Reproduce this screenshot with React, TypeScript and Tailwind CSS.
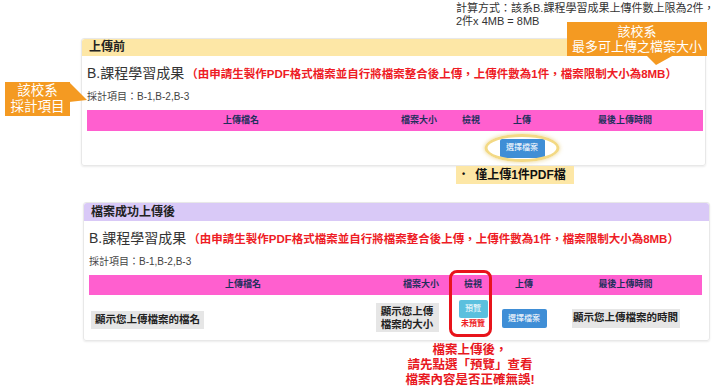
import React from 'react';

const FONT = { fontFamily: '"Liberation Sans", "Noto Sans CJK TC", sans-serif' };

const HeaderBar: React.FC = () => (
    <div className="grid h-full grid-cols-[282px_76px_52px_50px_1fr] items-center bg-[#ff5fcf] text-[9px] font-bold text-[#1e2f5c]">
        <div className="pl-[26px] text-center">上傳檔名</div>
        <div className="pl-[24px] text-center">檔案大小</div>
        <div className="text-center">檢視</div>
        <div className="text-center">上傳</div>
        <div className="text-center">最後上傳時間</div>
    </div>
);

const Intro: React.FC = () => (
    <>
        <div className="flex items-baseline pt-[7px] leading-[20px]">
            <span className="text-[14px] text-[#333]">B.課程學習成果</span>
            <span className="ml-[2px] text-[11.5px] font-bold text-[#ee1c25]">
                （由申請生製作PDF格式檔案並自行將檔案整合後上傳，上傳件數為1件，檔案限制大小為8MB）
            </span>
        </div>
        <div className="mt-[6px] text-[10px] leading-[14px] text-[#444]">採計項目：B-1,B-2,B-3</div>
    </>
);

const UploadButton: React.FC = () => (
    <div className="flex h-[19px] w-[45px] items-center justify-center rounded-[2px] bg-[#3f8ed6] text-[8px] text-white">
        選擇檔案
    </div>
);

export default function App() {
    return (
        <div lang="zh-Hant-TW" className="relative h-[388px] w-[718px] overflow-hidden bg-white" style={FONT}>
            {/* note on top */}
            <div className="ml-[456px] whitespace-nowrap pt-[2px] text-[11px] leading-[13px] text-[#333]">
                <div>計算方式：該系B.課程學習成果上傳件數上限為2件，</div>
                <div>2件x 4MB = 8MB</div>
            </div>

            {/* before upload */}
            <div className="ml-[81px] mt-[10px] w-[625px] rounded-[3px] border border-[#e8e8e8] shadow-[0_1px_2px_rgba(0,0,0,0.08)]">
                <div className="h-[17px] rounded-t-[3px] bg-[#fde7a6] px-[7px] text-[12px] font-bold leading-[17px] text-[#222]">上傳前</div>
                <div className="pl-[5px] pr-[2px]">
                    <Intro />
                    <div className="mt-[6px] h-[21px]">
                        <HeaderBar />
                    </div>
                    <div className="grid h-[34px] grid-cols-[282px_76px_52px_50px_1fr] items-center">
                        <div />
                        <div />
                        <div />
                        <div className="relative flex justify-center">
                            <div className="absolute left-1/2 top-1/2 h-[28px] w-[75px] -translate-x-1/2 -translate-y-1/2 rounded-[50%] border-[3px] border-[#f3d984] shadow-[0_0_4px_rgba(230,200,110,0.8)]" />
                            <UploadButton />
                        </div>
                        <div />
                    </div>
                </div>
            </div>
            <div className="ml-[456px] flex h-[18px] w-[118px] items-center bg-[#fde7a6] text-[12px] font-bold text-[#111]">
                <span className="ml-[6px] mr-[10px] text-[9px]">•</span>僅上傳1件PDF檔
            </div>

            {/* after upload */}
            <div className="ml-[83px] mt-[18px] w-[627px] rounded-[3px] border border-[#e8e8e8] shadow-[0_1px_2px_rgba(0,0,0,0.08)]">
                <div className="h-[18px] rounded-t-[3px] bg-[#d9c9f7] px-[7px] text-[12px] font-bold leading-[18px] text-[#222]">檔案成功上傳後</div>
                <div className="pl-[5px] pr-[7px]">
                    <Intro />
                    <div className="mt-[6px] h-[20px]">
                        <HeaderBar />
                    </div>
                    <div className="grid h-[45px] grid-cols-[282px_76px_52px_50px_1fr] items-center">
                        <div className="pl-[2px] pt-[5px]">
                            <div className="flex h-[18px] w-[113px] items-center justify-center bg-[#e6e6e6] text-[10.5px] font-bold text-[#222]">
                                顯示您上傳檔案的檔名
                            </div>
                        </div>
                        <div className="flex justify-center pr-[4px]">
                            <div className="flex h-[29px] w-[63px] flex-col items-center justify-center bg-[#e6e6e6] text-[10.5px] font-bold leading-[13px] text-[#222]">
                                <span>顯示您上傳</span>
                                <span>檔案的大小</span>
                            </div>
                        </div>
                        <div className="relative flex flex-col items-center pb-[6px]">
                            <div className="flex h-[18px] w-[29px] items-center justify-center rounded-[2px] bg-[#5bc0de] text-[8px] text-white">預覽</div>
                            <div className="mt-[1px] text-[8px] font-bold leading-[10px] text-[#ee1c25]">未預覽</div>
                        </div>
                        <div className="flex justify-center pt-[2px]">
                            <UploadButton />
                        </div>
                        <div className="flex justify-center pt-[1px]">
                            <div className="flex h-[19px] w-[108px] items-center justify-center bg-[#e6e6e6] text-[10.5px] font-bold text-[#222]">
                                顯示您上傳檔案的時間
                            </div>
                        </div>
                    </div>
                </div>
            </div>
            <div className="ml-[390px] mt-[2px] w-[160px] text-center text-[12.5px] font-bold leading-[15px] text-[#e8191f]">
                <div>檔案上傳後，</div>
                <div>請先點選「預覽」查看</div>
                <div>檔案內容是否正確無誤!</div>
            </div>

            {/* red frame around 檢視 column */}
            <div className="absolute left-[449px] top-[270px] h-[67px] w-[43px] rounded-[8px] border-[3px] border-[#e8141b]" />

            {/* left callout */}
            <div className="absolute left-[5px] top-[82px] flex h-[34px] w-[65px] flex-col items-center justify-center bg-[#f49a22] text-[13.5px] leading-[16px] text-white">
                <span>該校系</span>
                <span>採計項目</span>
            </div>
            <svg className="absolute left-[69px] top-[82px]" width="20" height="22" viewBox="0 0 20 22">
                <polygon points="0,0 18,18 0,20" fill="#f49a22" />
            </svg>

            {/* right callout */}
            <div className="absolute left-[567px] top-[22px] flex h-[34px] w-[140px] flex-col items-center justify-center bg-[#f49a22] text-[13px] leading-[15px] text-white">
                <span>該校系</span>
                <span>最多可上傳之檔案大小</span>
            </div>
            <svg className="absolute left-[640px] top-[55px]" width="40" height="12" viewBox="0 0 40 12">
                <polygon points="6,0 34,0 16,10" fill="#f49a22" />
            </svg>
        </div>
    );
}
